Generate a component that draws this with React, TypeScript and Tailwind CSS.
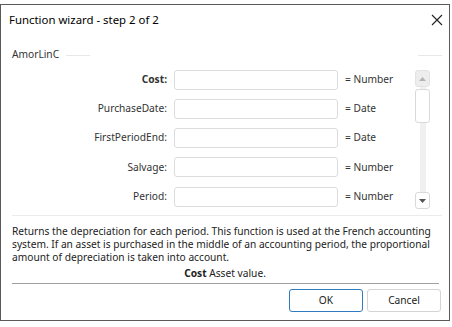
import React from "react";

const rows = [
  { label: "Cost", type: "Number", bold: true },
  { label: "PurchaseDate", type: "Date" },
  { label: "FirstPeriodEnd", type: "Date" },
  { label: "Salvage", type: "Number" },
  { label: "Period", type: "Number" },
];

export default function App() {
  return (
    <div className="w-[452px] h-[327px] bg-white pt-[4px]" style={{ fontFamily: '"Noto Sans", sans-serif' }}>
      <div className="w-[450px] h-[317px] border border-[#5a5a5a] bg-white flex flex-col text-[10.2px] text-[#222]">
        {/* Title bar */}
        <div className="h-[30px] flex items-center justify-between pl-[8px] pr-[6px]">
          <span className="text-[11.4px] text-black">Function wizard - step 2 of 2</span>
          <svg width="12" height="12" viewBox="0 0 12 12">
            <path d="M1 1 L11 11 M11 1 L1 11" stroke="#222" strokeWidth="1.1" />
          </svg>
        </div>
        {/* Group header */}
        <div className="h-[20px] mt-[10px] flex items-center pl-[11px] pr-[7px]">
          <span className="text-[#333]">AmorLinC</span>
          <div className="ml-[7px] w-[24px] h-px bg-[#e8e8e8]" />
          <div className="flex-1" />
          <div className="w-[24px] h-px bg-[#e8e8e8]" />
        </div>
        {/* Params + scrollbar */}
        <div className="flex pl-[11px] pr-[19px]">
          <div className="flex-1 flex flex-col">
            {rows.map((r) => (
              <div key={r.label} className="h-[29.25px] flex items-center">
                <div className={`w-[162px] text-right pr-[7px] text-[#333] ${r.bold ? "font-bold" : ""}`}>{r.label}:</div>
                <div className="w-[164px] h-[20px] border border-[#dcdcdc] rounded-[3px] bg-white" />
                <div className="ml-[7px] text-[#333]">= {r.type}</div>
              </div>
            ))}
          </div>
          <div className="w-[15px] flex flex-col items-center pt-[5px] pb-[2px]">
            <div className="w-[15px] h-[17px] rounded-[3px] bg-[#ededed] border border-[#e3e3e3] flex items-center justify-center">
              <svg width="7" height="4" viewBox="0 0 7 4"><path d="M0 4 L3.5 0 L7 4 Z" fill="#b4b4b4" /></svg>
            </div>
            <div className="flex-1 w-[6px] bg-[#f0f0f0] flex flex-col items-center">
              <div className="w-[15px] shrink-0 h-[34px] mt-[2px] rounded-[3px] bg-white border border-[#d9d9d9]" />
            </div>
            <div className="w-[15px] h-[17px] rounded-[3px] bg-white border border-[#d9d9d9] flex items-center justify-center">
              <svg width="7" height="4" viewBox="0 0 7 4"><path d="M0 0 L7 0 L3.5 4 Z" fill="#555" /></svg>
            </div>
          </div>
        </div>
        <div className="ml-[11px] mr-[7px] mt-[4px] h-px bg-[#ececec]" />
        <div className="px-[11px] pt-[9px] leading-[13px] text-[#222]">
          Returns the depreciation for each period. This function is used at the French accounting system. If an asset is purchased in the middle of an accounting period, the proportional amount of depreciation is taken into account.
        </div>
        <div className="text-center leading-[13px] mt-[3px] text-[#222]">
          <span className="font-bold">Cost</span> Asset value.
        </div>
        <div className="ml-[11px] mr-[10px] mt-[3px] h-px bg-[#a0a0a0]" />
        <div className="flex justify-end gap-[4px] pr-[8px] pt-[5px]">
          <button className="w-[74px] h-[23px] border border-[#2f7bbf] rounded-[3px] bg-white text-[#222]">OK</button>
          <button className="w-[74px] h-[23px] border border-[#d4d4d4] rounded-[3px] bg-white text-[#222]">Cancel</button>
        </div>
      </div>
    </div>
  );
}
